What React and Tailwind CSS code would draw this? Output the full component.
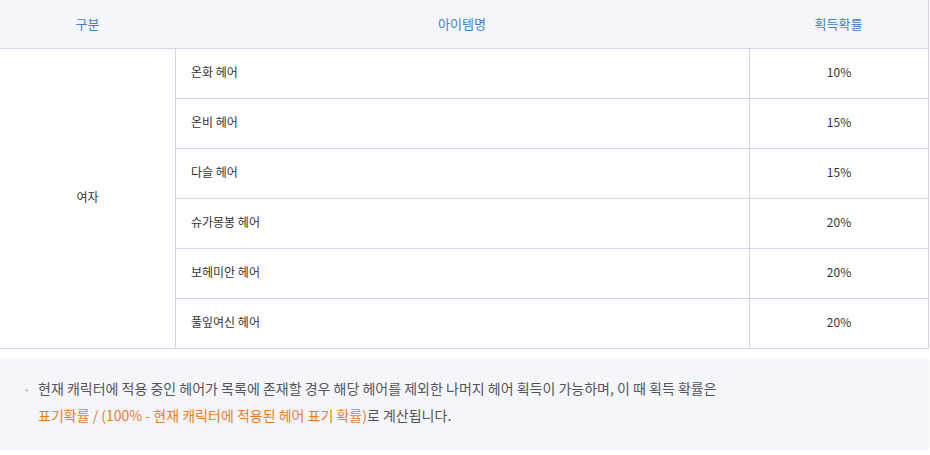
export default function App() {
  const rows = [
    ["온화 헤어", "10%"],
    ["온비 헤어", "15%"],
    ["다슬 헤어", "15%"],
    ["슈가몽봉 헤어", "20%"],
    ["보헤미안 헤어", "20%"],
    ["풀잎여신 헤어", "20%"],
  ];
  return (
    <div className="w-[930px] h-[455px] bg-white text-[13px]" style={{ fontFamily: '"Noto Sans CJK KR", "Noto Sans", sans-serif' }}>
      <div className="w-[929px] border-r border-[#cfd9e8]">
        <div className="flex h-[49px] bg-[#f5f6fb] border-b border-[#cfd9e8] text-[#3f7fd6]">
          <div className="w-[175px] flex items-center justify-center">구분</div>
          <div className="w-[574px] flex items-center justify-center">아이템명</div>
          <div className="flex-1 flex items-center justify-center">획득확률</div>
        </div>
        <div className="flex border-b border-[#cfd9e8] text-[#333]">
          <div className="w-[175px] flex items-center justify-center text-[12px] pb-[3px]">여자</div>
          <div className="flex-1 border-l border-[#cfd9e8]">
            {rows.map(([name, pct], i) => (
              <div key={i} className={"flex " + (i < rows.length - 1 ? "h-[50px] border-b border-[#cfd9e8]" : "h-[49px]")}>
                <div className="w-[573px] flex items-center pl-[15px] pb-[3px] text-[12px]">{name}</div>
                <div className="flex-1 border-l border-[#cfd9e8] flex items-center justify-center pb-[3px] text-[12px]">{pct}</div>
              </div>
            ))}
          </div>
        </div>
      </div>
      <div className="mt-[10px] w-[929px] h-[92px] bg-[#f5f6fb] pl-[25px] pt-[16px] text-[14px] leading-[27px] text-[#555]">
        <div className="flex">
          <span className="w-[13px] shrink-0 text-[#bbb] text-[10px]">•</span>
          <div>
            <div>현재 캐릭터에 적용 중인 헤어가 목록에 존재할 경우 해당 헤어를 제외한 나머지 헤어 획득이 가능하며, 이 때 획득 확률은</div>
            <div><span className="text-[#ef7b1f]">표기확률 / (100% - 현재 캐릭터에 적용된 헤어 표기 확률)</span>로 계산됩니다.</div>
          </div>
        </div>
      </div>
    </div>
  );
}
